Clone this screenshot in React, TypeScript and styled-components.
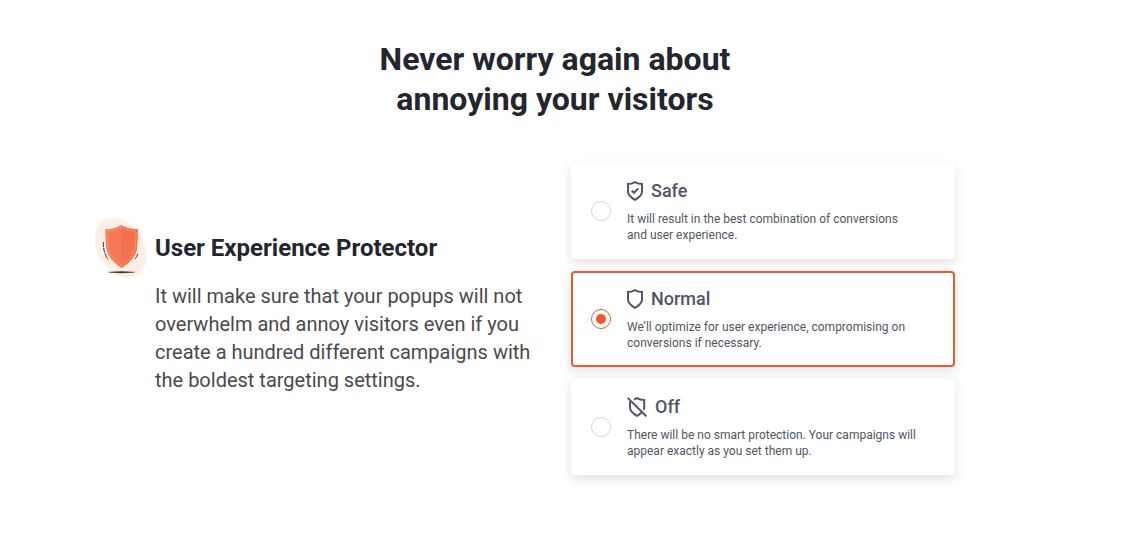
import React, { useState } from "react";
import styled, { createGlobalStyle } from "styled-components";

const GlobalStyle = createGlobalStyle`
  *, *::before, *::after { box-sizing: border-box; }
  body {
    margin: 0;
    background: #fff;
    font-family: Roboto, "Liberation Sans", sans-serif;
  }
`;

const Page = styled.main`
  padding: 39px 42px 48px 16px;
`;

const Heading = styled.h1`
  max-width: 400px;
  margin: 0 auto 44px;
  color: #23262e;
  font-size: 32px;
  line-height: 40px;
  font-weight: 700;
  text-align: center;
`;

const Columns = styled.section`
  display: grid;
  grid-template-columns: 1fr 1fr;
  gap: 32px;
  align-items: center;
  max-width: 800px;
  margin: 0 auto;

  @media (max-width: 720px) {
    grid-template-columns: 1fr;
  }
`;

const Feature = styled.article`
  position: relative;
  padding-bottom: 12px;
`;

const FeatureArt = styled.svg`
  position: absolute;
  left: -61px;
  top: -14px;
  width: 54px;
  height: 60px;
`;

const FeatureTitle = styled.h2`
  margin: 0 0 18px;
  color: #23262e;
  font-size: 24px;
  line-height: 32px;
  font-weight: 700;
`;

const FeatureText = styled.p`
  margin: 0;
  color: #4a4a4a;
  font-size: 20px;
  line-height: 28px;
`;

const Options = styled.fieldset`
  display: grid;
  gap: 12px;
  min-width: 0;
  margin: 0;
  padding: 0;
  border: 0;
`;

const OptionCard = styled.label<{ $selected: boolean }>`
  display: flex;
  align-items: center;
  gap: 16px;
  padding: 14px 18px;
  border: 2px solid ${(p) => (p.$selected ? "#ec5a29" : "#fff")};
  border-radius: 4px;
  background: #fff;
  box-shadow: 0 4px 12px rgba(0, 0, 0, 0.12);
  cursor: pointer;
`;

const Radio = styled.input`
  appearance: none;
  flex: none;
  display: grid;
  place-items: center;
  width: 20px;
  height: 20px;
  margin: 0;
  border: 1px solid #d5d6dc;
  border-radius: 50%;
  background: #fff;
  cursor: inherit;

  &:checked { border-color: #ec5a29; }
  &:checked::before {
    content: "";
    width: 10px;
    height: 10px;
    border-radius: 50%;
    background: #ec5a29;
  }
`;

const OptionBody = styled.div`
  display: grid;
  gap: 8px;
`;

const OptionTitle = styled.div`
  display: flex;
  align-items: center;
  gap: 8px;
  color: #505763;
  font-size: 18px;
  line-height: 24px;
  font-weight: 500;
`;

const OptionText = styled.p`
  margin: 0;
  max-width: 292px;
  color: #505763;
  font-size: 12px;
  line-height: 16px;
`;

const OUTLINE = "M8 1.1 Q11.4 3.1 15 3.1 V10.6 C15 14.5 11.8 16.8 8 18.9 C4.2 16.8 1 14.5 1 10.6 V3.1 Q4.6 3.1 8 1.1 Z";

const ShieldIcon = ({ checked = false }: { checked?: boolean }) => (
  <svg width="16" height="20" viewBox="0 0 16 20" fill="none" stroke="currentColor" strokeWidth="2" aria-hidden="true">
    <path d={OUTLINE} />
    {checked && <path d="M4.7 9.6 L7 11.8 L11.3 7.4" />}
  </svg>
);

const ShieldOffIcon = () => (
  <svg width="20" height="20" viewBox="0 0 20 20" fill="none" stroke="currentColor" strokeWidth="2" aria-hidden="true">
    <path d="M7 2.3 Q8.8 2 10 1.2 Q13.2 3 17.2 3.1 V10.5 Q17.2 11.7 16.6 12.8" />
    <path d="M3 4.6 V10.6 C3 14.5 6.2 16.8 10 18.8 Q12.6 17.5 14.4 15.8" />
    <path d="M0.7 0.9 L19.3 19.3" />
  </svg>
);

const ProtectorArt = () => (
  <FeatureArt viewBox="0 0 54 60" aria-hidden="true">
    <path d="M16 .6 C27-.8 36 4 43 13 C50 22 54 32 52 43 C50 54 42 60 33 59.5 C22 59 14 51 8 43 C1 34-.5 24 1.5 15 C3.5 6 8 1.5 16 .6 Z" fill="#ffeee4" />
    <path d="M27 7.2 Q34 11 44 11.2 L43 30 C42.4 38 35 45 27.5 50 C20 45 12.6 38 12 28 L11.2 11.2 Q20.5 11 27 7.2 Z" fill="#f67b55" />
    <path d="M27 7.2 Q34 11 44 11.2 L43 30 C42.4 38 35 45 27.5 50 Z" fill="#f1734f" />
    <path d="M27 9.4 Q34 12.8 42.2 13 L41.3 29.5 C40.6 36.8 34 43 27.5 47.7 C21 43 14.3 36.8 13.8 28 L13 13 Q21 12.8 27 9.4 Z" fill="none" stroke="#fbb59c" strokeWidth="1" strokeDasharray="1.2 1.6" />
    <path d="M15 20 L19 17 L21 21 L25 19 M15 27 L18 25 L21 29 L26 25 M18 35 L21 32 L25 36 M30 17 L34 20 L39 17 M30 27 L34 24 L38 28 L40 25 M30 36 L34 32 L37 34" fill="none" stroke="#e76643" strokeWidth=".5" opacity=".65" />
    <path d="M9.3 24 Q9 34 14 41.5" fill="none" stroke="#343434" strokeWidth="1" strokeDasharray="5 .7" />
    <path d="M43.8 35.8 Q43.2 38.2 41 40.8" fill="none" stroke="#343434" strokeWidth="1" />
    <path d="M14.5 54.2 Q27 52.6 40.5 54.2 Q27 55.6 14.5 54.2 Z" fill="#333" stroke="#333" strokeWidth=".4" />
  </FeatureArt>
);

const levels = [
  { id: "safe", title: "Safe", icon: <ShieldIcon checked />, text: "It will result in the best combination of conversions and user experience." },
  { id: "normal", title: "Normal", icon: <ShieldIcon />, text: "We’ll optimize for user experience, compromising on conversions if necessary." },
  { id: "off", title: "Off", icon: <ShieldOffIcon />, text: "There will be no smart protection. Your campaigns will appear exactly as you set them up." },
];

export default function App() {
  const [level, setLevel] = useState("normal");
  return (
    <>
      <GlobalStyle />
      <Page>
        <Heading>Never worry again about annoying your visitors</Heading>
        <Columns>
          <Feature>
            <ProtectorArt />
            <FeatureTitle>User Experience Protector</FeatureTitle>
            <FeatureText>
              It will make sure that your popups will not overwhelm and annoy visitors even if you
              create a hundred different campaigns with the boldest targeting settings.
            </FeatureText>
          </Feature>
          <Options aria-label="Protection level">
            {levels.map((item) => (
              <OptionCard key={item.id} htmlFor={item.id} $selected={level === item.id}>
                <Radio
                  type="radio"
                  id={item.id}
                  name="protection"
                  value={item.id}
                  checked={level === item.id}
                  onChange={() => setLevel(item.id)}
                />
                <OptionBody>
                  <OptionTitle>{item.icon}{item.title}</OptionTitle>
                  <OptionText>{item.text}</OptionText>
                </OptionBody>
              </OptionCard>
            ))}
          </Options>
        </Columns>
      </Page>
    </>
  );
}
